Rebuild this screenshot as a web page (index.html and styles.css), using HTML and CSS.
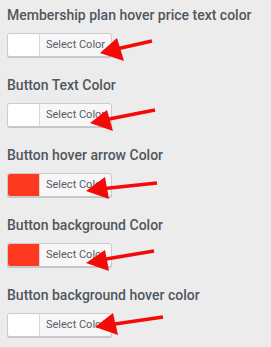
FILE: index.html
```html
<!DOCTYPE html>
<html lang="en">
<head>
    <meta charset="UTF-8">
    <meta name="viewport" content="width=device-width, initial-scale=1.0">
    <title>Colors</title>
    <link rel="stylesheet" href="styles.css">
</head>
<body>

    <div class="settings">
        <div class="field">
            <label>Membership plan hover price text color</label>
            <button class="color-btn"><span class="swatch"></span><span class="btn-text">Select Color</span></button>
        </div>
        <div class="field">
            <label>Button Text Color</label>
            <button class="color-btn"><span class="swatch"></span><span class="btn-text">Select Color</span></button>
        </div>
        <div class="field">
            <label>Button hover arrow Color</label>
            <button class="color-btn"><span class="swatch red"></span><span class="btn-text">Select Color</span></button>
        </div>
        <div class="field">
            <label>Button background Color</label>
            <button class="color-btn"><span class="swatch red"></span><span class="btn-text">Select Color</span></button>
        </div>
        <div class="field">
            <label>Button background hover color</label>
            <button class="color-btn"><span class="swatch"></span><span class="btn-text">Select Color</span></button>
        </div>
    </div>

    <!-- annotation arrows drawn over the screenshot -->
    <svg class="arrows" width="271" height="347" viewBox="0 0 271 347">
        <g fill="#f50a0a" stroke="#f50a0a">
            <line x1="152" y1="41" x2="112" y2="50" stroke-width="3.5"/>
            <polygon points="100,53 117,38 124,61" stroke-width="0"/>

            <line x1="155" y1="110" x2="104" y2="120" stroke-width="3.5"/>
            <polygon points="90,123 107,110 113,131" stroke-width="0"/>

            <line x1="157" y1="183" x2="100" y2="189" stroke-width="3.5"/>
            <polygon points="86,191 105,177 109,199" stroke-width="0"/>

            <line x1="154" y1="251" x2="100" y2="260" stroke-width="3.5"/>
            <polygon points="86,263 105,250 109,271" stroke-width="0"/>

            <line x1="163" y1="317" x2="108" y2="325" stroke-width="3.5"/>
            <polygon points="95,327 113,313 118,335" stroke-width="0"/>
        </g>
    </svg>

</body>
</html>
```

FILE: styles.css
```css
body {
    font-family: Roboto, "Liberation Sans", sans-serif;
    margin: 0;
    padding: 0;
    background: #ececec;
    position: relative;
    width: 271px;
    height: 347px;
    overflow: hidden;
}
.settings {
    padding: 0 7px;
}
.field {
    height: 70px;
}
.field label {
    display: block;
    padding-top: 6px;
    font-size: 14px;
    line-height: 18px;
    font-weight: 500;
    color: #50575e;
    margin-bottom: 9px;
    white-space: nowrap;
}
.color-btn {
    display: flex;
    align-items: stretch;
    padding: 0;
    height: 24px;
    border: 1px solid #cccccc;
    border-radius: 3px;
    background: #f7f7f7;
    box-shadow: 0 1px 0 #c4c4c4;
    overflow: hidden;
    cursor: pointer;
}
.swatch {
    width: 31px;
    background: #ffffff;
    border-right: 1px solid #d8d8d8;
}
.swatch.red {
    background: #fd3a1f;
}
.btn-text {
    padding: 0 6px 0 6px;
    font-family: Roboto, "Liberation Sans", sans-serif;
    font-size: 11px;
    line-height: 22px;
    color: #555d66;
}
.arrows {
    position: absolute;
    left: 0;
    top: 0;
}
```
